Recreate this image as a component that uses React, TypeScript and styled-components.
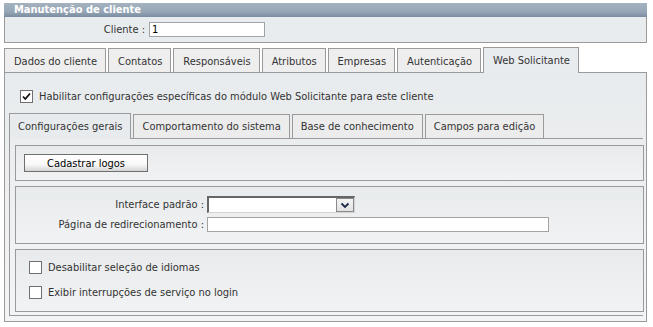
import React from "react";
import styled, { createGlobalStyle } from "styled-components";

const GlobalStyle = createGlobalStyle`
  body {
    margin: 0;
    background: #ffffff;
    font-family: "DejaVu Sans Condensed", "DejaVu Sans", sans-serif;
    font-size: 11px;
    color: #333;
  }
`;

const outerTabs = [
  "Dados do cliente",
  "Contatos",
  "Responsáveis",
  "Atributos",
  "Empresas",
  "Autenticação",
  "Web Solicitante",
];

const innerTabs = [
  "Configurações gerais",
  "Comportamento do sistema",
  "Base de conhecimento",
  "Campos para edição",
];

const App: React.FC = () => {
  return (
    <Page>
      <GlobalStyle />
      <TitleBar>Manutenção de cliente</TitleBar>
      <ClienteBox>
        <FieldLabel $width={140}>Cliente :</FieldLabel>
        <TextInput $width={116} defaultValue="1" />
      </ClienteBox>

      <TabRow>
        {outerTabs.map((t, i) => (
          <Tab key={t} $active={i === outerTabs.length - 1}>
            {t}
          </Tab>
        ))}
      </TabRow>
      <Panel>
        <CheckRow $indent={11}>
          <Check $checked>
            <svg width="11" height="11" viewBox="0 0 11 11">
              <path d="M2 5.5 L4.3 8 L9 2.5" fill="none" stroke="#111" strokeWidth="1.8" />
            </svg>
          </Check>
          Habilitar configurações específicas do módulo Web Solicitante para este cliente
        </CheckRow>

        <InnerTabRow>
          {innerTabs.map((t, i) => (
            <InnerTab key={t} $active={i === 0}>
              {t}
            </InnerTab>
          ))}
        </InnerTabRow>
        <InnerPanel>
          <Box $height={36}>
            <ButtonRow>
              <Button>Cadastrar logos</Button>
            </ButtonRow>
          </Box>

          <Box $height={58}>
            <FormGrid>
              <FieldLabel $width={188}>Interface padrão :</FieldLabel>
              <Select>
                <SelectArrow>
                  <svg width="10" height="7" viewBox="0 0 10 7">
                    <path d="M1.5 1.5 L5 5 L8.5 1.5" fill="none" stroke="#1a2a4a" strokeWidth="1.8" />
                  </svg>
                </SelectArrow>
              </Select>
              <FieldLabel $width={188}>Página de redirecionamento :</FieldLabel>
              <TextInput $width={342} />
            </FormGrid>
          </Box>

          <Box $height={63}>
            <CheckList>
              <CheckRow $indent={13}>
                <Check />
                Desabilitar seleção de idiomas
              </CheckRow>
              <CheckRow $indent={13}>
                <Check />
                Exibir interrupções de serviço no login
              </CheckRow>
            </CheckList>
          </Box>
        </InnerPanel>
      </Panel>
    </Page>
  );
};

export default App;

const Page = styled.div`
  width: 643px;
  padding: 3px 0 0 4px;
`;

const TitleBar = styled.div`
  height: 14px;
  line-height: 13px;
  padding-left: 10px;
  color: #ffffff;
  font-weight: bold;
  font-size: 11px;
  background: linear-gradient(to bottom, #a5b3c0 0%, #95a5b5 65%, #7a8ca0 100%);
`;

const ClienteBox = styled.div`
  height: 25px;
  border: 1px solid #9a9a9a;
  border-top: none;
  background: #e9ecee;
  display: flex;
  align-items: center;
  gap: 4px;
`;

const FieldLabel = styled.span<{ $width: number }>`
  width: ${(p) => p.$width}px;
  text-align: right;
  color: #333;
  white-space: nowrap;
`;

const TextInput = styled.input`
  width: ${(p: { $width: number }) => p.$width}px;
  height: 15px;
  box-sizing: border-box;
  border: 1px solid #a3a3a3;
  background: #fff;
  padding: 0 2px;
  font: inherit;
  font-size: 11px;
  color: #000;
  outline: none;
`;

const TabRow = styled.div`
  display: flex;
  align-items: flex-end;
  gap: 2px;
  margin-top: 5px;
  height: 24px;
`;

const Tab = styled.div<{ $active?: boolean }>`
  height: ${(p) => (p.$active ? 26 : 24)}px;
  line-height: ${(p) => (p.$active ? 26 : 25)}px;
  box-sizing: border-box;
  padding: 0 8px 0 9px;
  border: 1px solid #9a9a9a;
  border-bottom: none;
  background: ${(p) => (p.$active ? "#e9ecee" : "#eeeeee")};
  color: #333;
  white-space: nowrap;
  position: relative;
  margin-bottom: ${(p) => (p.$active ? -1 : 0)}px;
  z-index: ${(p) => (p.$active ? 2 : 1)};
`;

const Panel = styled.div`
  border: 1px solid #9a9a9a;
  height: 250px;
  box-sizing: border-box;
  background: linear-gradient(to bottom, #e8ebed 0%, #f3f4f5 100%);
  padding: 17px 0 0 4px;
  position: relative;
  z-index: 1;
`;

const CheckRow = styled.label<{ $indent: number }>`
  display: flex;
  align-items: center;
  gap: 6px;
  padding-left: ${(p) => p.$indent}px;
  color: #333;
  white-space: nowrap;
`;

const Check = styled.span<{ $checked?: boolean }>`
  width: 13px;
  height: 13px;
  box-sizing: border-box;
  border: 1px solid #707070;
  background: #fff;
  display: inline-flex;
  align-items: center;
  justify-content: center;
`;

const InnerTabRow = styled.div`
  display: flex;
  align-items: flex-end;
  gap: 2px;
  margin-top: 10px;
  height: 25px;
`;

const InnerTab = styled(Tab)`
  height: ${(p) => (p.$active ? 26 : 24)}px;
  line-height: ${(p) => (p.$active ? 25 : 24)}px;
  padding: 0 8px;
  background: ${(p) => (p.$active ? "#e8ebed" : "#ececec")};
`;

const InnerPanel = styled.div`
  width: 634px;
  border: 1px solid #9a9a9a;
  border-right: none;
  box-sizing: border-box;
  padding: 6px 0 3px 5px;
  display: flex;
  flex-direction: column;
  gap: 5px;
  position: relative;
  z-index: 1;
`;

const Box = styled.div<{ $height: number }>`
  width: 629px;
  height: ${(p) => p.$height}px;
  box-sizing: border-box;
  border: 1px solid #9a9a9a;
  background: linear-gradient(to bottom, #e8ebed 0%, #f1f2f3 100%);
`;

const ButtonRow = styled.div`
  padding: 8px 0 0 8px;
`;

const Button = styled.button`
  width: 124px;
  height: 18px;
  border: 1px solid #6f6f6f;
  border-radius: 0;
  background: linear-gradient(to bottom, #ffffff 0%, #f8f8f8 60%, #d4d4d4 100%);
  font: inherit;
  font-size: 11px;
  color: #000;
  padding: 0;
  cursor: pointer;
`;

const FormGrid = styled.div`
  display: grid;
  grid-template-columns: 188px auto;
  justify-content: start;
  align-items: center;
  column-gap: 3px;
  row-gap: 4px;
  padding-top: 9px;
`;

const Select = styled.div`
  width: 148px;
  height: 17px;
  box-sizing: border-box;
  border-top: 2px solid #666;
  border-left: 2px solid #666;
  border-right: 1px solid #d4d4d4;
  border-bottom: 1px solid #d4d4d4;
  background: #fff;
  display: flex;
  justify-content: flex-end;
`;

const SelectArrow = styled.div`
  width: 18px;
  height: 14px;
  box-sizing: border-box;
  border: 1px solid #8a8a8a;
  background: linear-gradient(to bottom, #f4f4f4, #e2e2e2);
  display: flex;
  align-items: center;
  justify-content: center;
`;

const CheckList = styled.div`
  display: flex;
  flex-direction: column;
  gap: 12px;
  padding-top: 11px;
`;
